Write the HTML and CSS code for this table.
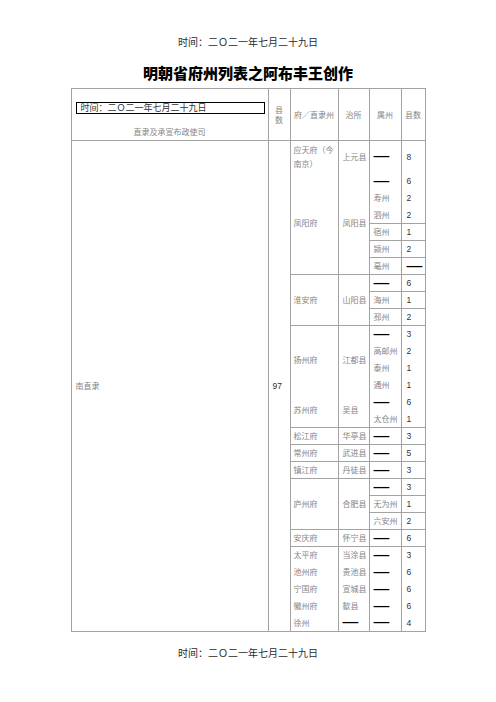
FILE: index.html
```html
<!DOCTYPE html>
<html lang="zh">
<head>
<meta charset="utf-8">
<title>明朝省府州列表</title>
<link rel="stylesheet" href="styles.css">
</head>
<body>
<div class="page">
  <div class="stamp">时间：二Ｏ二一年七月二十九日</div>
  <div class="title">明朝省府州列表之阿布丰王创作</div>
  <table class="grid">
    <colgroup>
      <col class="c1"><col class="c2"><col class="c3"><col class="c4"><col class="c5"><col class="c6">
    </colgroup>
    <thead>
      <tr class="head">
        <th class="h1"><span class="box">时间：二Ｏ二一年七月二十九日</span><span class="lbl">直隶及承宣布政使司</span></th>
        <th>县<br>数</th>
        <th>府／直隶州</th>
        <th>治所</th>
        <th>属州</th>
        <th>县数</th>
      </tr>
    </thead>
    <tbody>
      <tr class="first">
        <td rowspan="28" class="prov b">南直隶</td>
        <td rowspan="28" class="cnt b">97</td>
        <td class="fu tall">应天府（今南京）</td>
        <td class="zs">上元县</td>
        <td class="sz"><span class="dash">——</span></td>
        <td class="n">8</td>
      </tr>
      <tr class="r">
        <td rowspan="6" class="fu b">凤阳府</td>
        <td rowspan="6" class="zs b">凤阳县</td>
        <td class="sz"><span class="dash">——</span></td>
        <td class="n">6</td>
      </tr>
      <tr class="r"><td class="sz">寿州</td><td class="n">2</td></tr>
      <tr class="r"><td class="sz b">泗州</td><td class="n b">2</td></tr>
      <tr class="r"><td class="sz b">宿州</td><td class="n b">1</td></tr>
      <tr class="r"><td class="sz b">颍州</td><td class="n b">2</td></tr>
      <tr class="r"><td class="sz b">亳州</td><td class="n b"><span class="dash">——</span></td></tr>

      <tr class="r">
        <td rowspan="3" class="fu b">淮安府</td>
        <td rowspan="3" class="zs b">山阳县</td>
        <td class="sz b"><span class="dash">——</span></td>
        <td class="n b">6</td>
      </tr>
      <tr class="r"><td class="sz b">海州</td><td class="n b">1</td></tr>
      <tr class="r"><td class="sz b">邳州</td><td class="n b">2</td></tr>

      <tr class="r">
        <td rowspan="4" class="fu">扬州府</td>
        <td rowspan="4" class="zs">江都县</td>
        <td class="sz"><span class="dash">——</span></td>
        <td class="n">3</td>
      </tr>
      <tr class="r"><td class="sz">高邮州</td><td class="n">2</td></tr>
      <tr class="r"><td class="sz">泰州</td><td class="n">1</td></tr>
      <tr class="r"><td class="sz">通州</td><td class="n">1</td></tr>

      <tr class="r">
        <td rowspan="2" class="fu b">苏州府</td>
        <td rowspan="2" class="zs b">吴县</td>
        <td class="sz"><span class="dash">——</span></td>
        <td class="n">6</td>
      </tr>
      <tr class="r"><td class="sz b">太仓州</td><td class="n b">1</td></tr>

      <tr class="r"><td class="fu b">松江府</td><td class="zs b">华亭县</td><td class="sz b"><span class="dash">——</span></td><td class="n b">3</td></tr>
      <tr class="r"><td class="fu b">常州府</td><td class="zs b">武进县</td><td class="sz b"><span class="dash">——</span></td><td class="n b">5</td></tr>
      <tr class="r"><td class="fu b">镇江府</td><td class="zs b">丹徒县</td><td class="sz b"><span class="dash">——</span></td><td class="n b">3</td></tr>

      <tr class="r">
        <td rowspan="3" class="fu b">庐州府</td>
        <td rowspan="3" class="zs b">合肥县</td>
        <td class="sz b"><span class="dash">——</span></td>
        <td class="n b">3</td>
      </tr>
      <tr class="r"><td class="sz b">无为州</td><td class="n b">1</td></tr>
      <tr class="r"><td class="sz b">六安州</td><td class="n b">2</td></tr>

      <tr class="r"><td class="fu b">安庆府</td><td class="zs b">怀宁县</td><td class="sz b"><span class="dash">——</span></td><td class="n b">6</td></tr>

      <tr class="r"><td class="fu">太平府</td><td class="zs">当涂县</td><td class="sz"><span class="dash">——</span></td><td class="n">3</td></tr>
      <tr class="r"><td class="fu">池州府</td><td class="zs">贵池县</td><td class="sz"><span class="dash">——</span></td><td class="n">6</td></tr>
      <tr class="r"><td class="fu">宁国府</td><td class="zs">宣城县</td><td class="sz"><span class="dash">——</span></td><td class="n">6</td></tr>
      <tr class="r"><td class="fu">徽州府</td><td class="zs">歙县</td><td class="sz"><span class="dash">——</span></td><td class="n">6</td></tr>
      <tr class="r"><td class="fu b">徐州</td><td class="zs b"><span class="dash">——</span></td><td class="sz b"><span class="dash">——</span></td><td class="n b">4</td></tr>
    </tbody>
  </table>
  <div class="stamp foot">时间：二Ｏ二一年七月二十九日</div>
</div>
</body>
</html>
```

FILE: styles.css
```css
body {
  margin: 0;
  background: #fff;
  font-family: "Noto Sans CJK SC", sans-serif;
}

.page {
  width: 496px;
  padding-top: 35px;
}

.stamp {
  text-align: center;
  font-family: "Noto Sans CJK TC", "Noto Sans CJK SC", sans-serif;
  font-size: 10px;
  line-height: 14px;
  color: #2a2a2a;
}

.stamp.foot {
  margin-top: 14px;
}

.title {
  text-align: center;
  font-size: 15px;
  font-weight: 900;
  line-height: 20px;
  margin: 14px 0 5px;
  color: #000;
}

.grid {
  margin: 0 auto;
  border-collapse: collapse;
  table-layout: fixed;
  width: 354px;
}

.c1 { width: 197px; }
.c2 { width: 22px; }
.c3 { width: 48px; }
.c4 { width: 31px; }
.c5 { width: 32px; }
.c6 { width: 24px; }

.grid td,
.grid th {
  border-left: 1px solid #a3a3a3;
  border-right: 1px solid #a3a3a3;
  padding: 0;
  font-size: 8px;
  line-height: 10px;
  font-weight: 400;
  color: #858585;
  vertical-align: middle;
  text-align: left;
  white-space: nowrap;
}

.grid th {
  border-top: 1px solid #a3a3a3;
  border-bottom: 1px solid #a3a3a3;
  text-align: center;
}

.grid .b {
  border-bottom: 1px solid #a3a3a3;
}

.head {
  height: 52px;
}

.grid th.h1 {
  vertical-align: top;
  padding: 13px 4px 0;
}

.box {
  display: block;
  box-sizing: border-box;
  width: 189px;
  height: 12px;
  border: 1px solid #000;
  padding: 0 4px;
  text-align: left;
  font-family: "Noto Sans CJK TC", "Noto Sans CJK SC", sans-serif;
  font-size: 9px;
  line-height: 10px;
  font-weight: 400;
  color: #333;
}

.lbl {
  display: block;
  margin-top: 13px;
}

.first {
  height: 32px;
}

.r {
  height: 17px;
}

.grid td.prov {
  padding-left: 4px;
}

.grid td.cnt {
  padding-left: 4px;
  font-family: "Liberation Sans", sans-serif;
  font-size: 8.5px;
  font-weight: 400;
  color: #333;
}

.grid td.fu {
  padding-left: 3px;
}

.grid td.tall {
  white-space: normal;
  line-height: 14px;
  padding-right: 2px;
}

.grid td.zs {
  padding-left: 4px;
}

.grid td.sz {
  padding-left: 4px;
}

.grid td.n {
  padding-left: 5px;
  font-family: "Liberation Sans", sans-serif;
  font-size: 8.5px;
  font-weight: 400;
  color: #333;
}

.dash {
  display: inline-block;
  font-family: "Liberation Sans", sans-serif;
  font-weight: 700;
  font-size: 8px;
  color: #000;
  letter-spacing: -0.3px;
  transform: scaleY(1.6);
}
```
